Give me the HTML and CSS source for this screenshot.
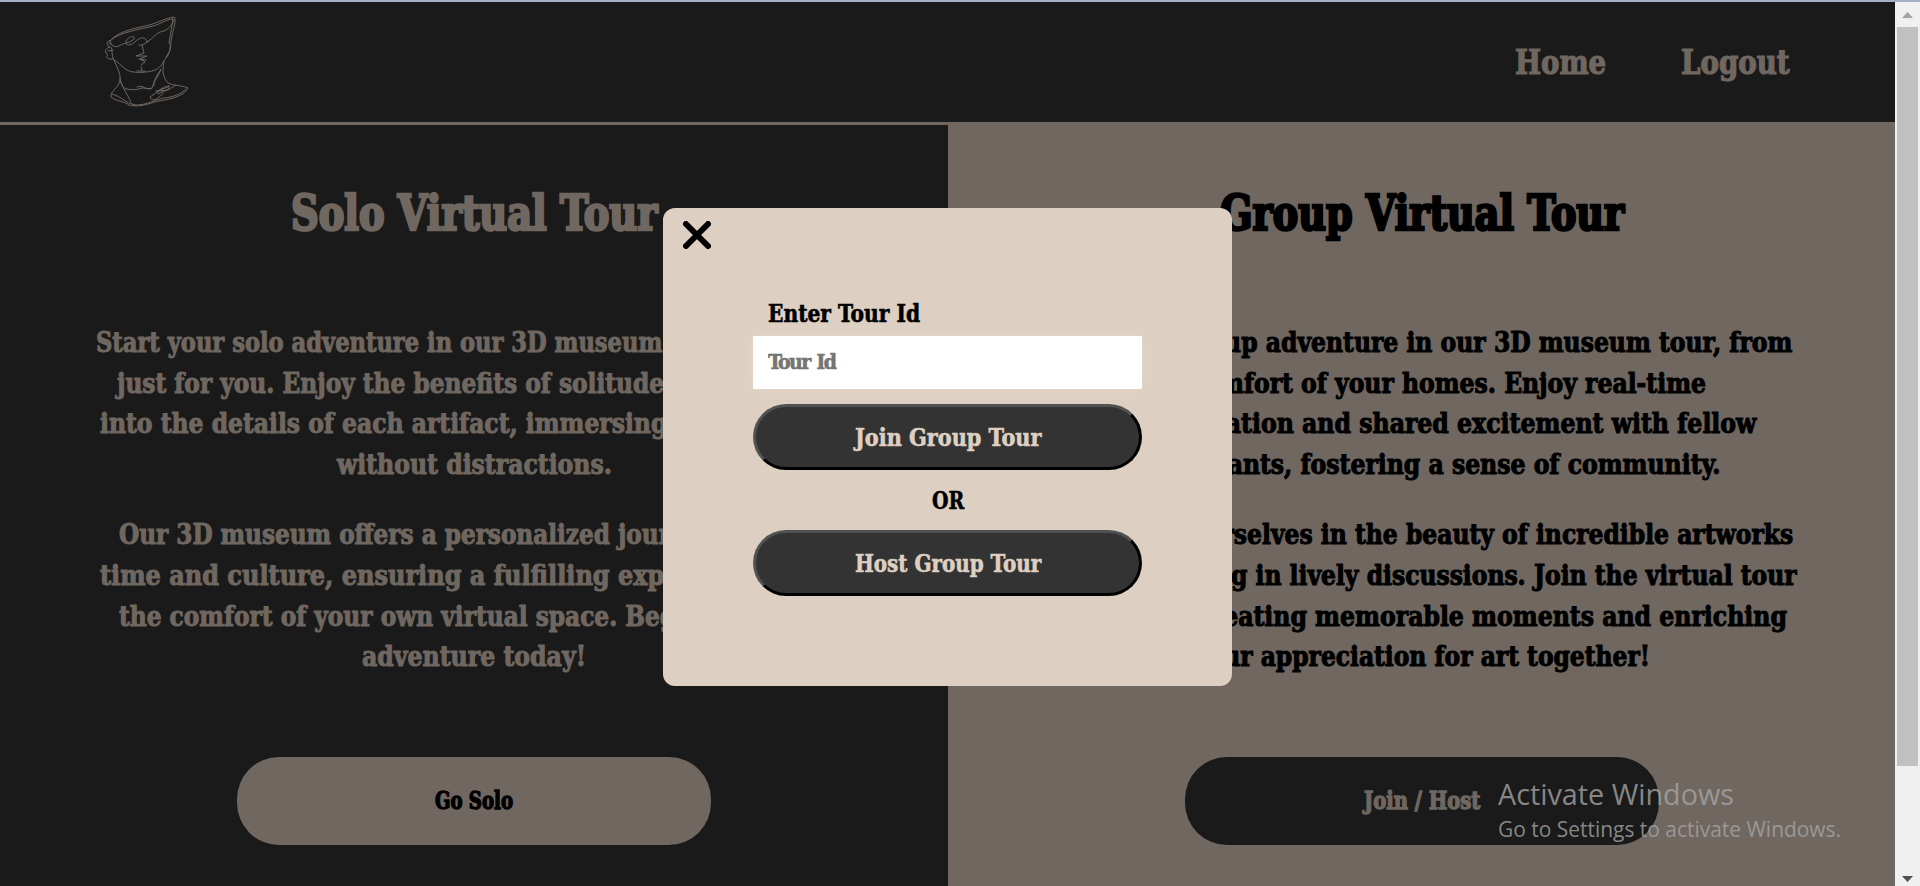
FILE: index.html
```html
<!DOCTYPE html>
<html lang="en">
<head>
<meta charset="utf-8">
<title>Virtual Tour</title>
<link rel="stylesheet" href="styles.css">
</head>
<body>
<div class="window">
  <div class="page">
    <header class="header">
      <svg class="logo" viewBox="0 2 120 120" fill="none" stroke="#6f6760" stroke-width="1" stroke-linejoin="round" stroke-linecap="round">
        <path d="M20 41C27 32 42 29 55 26C66 24 75 18 84 17C87 19 83 30 82 36C80 46 81 52 76 58C72 63 71 69 62 71C53 73 42 73 37 70C31 66 27 61 24 60C21 56 23 50 21 47"/>
        <path d="M21 40C29 33 46 30 59 27C70 25 76 19 83 19C85 22 79 29 74 31C66 32 64 38 57 42C56 36 49 37 45 42C41 46 34 46 36 41C39 36 46 35 44 39C41 43 33 43 29 46C24 48 21 45 20 41Z"/>
        <path d="M20 41C16 40 16 46 20 47C15 48 14 53 18 55C14 57 19 60 23 59M19 43L22 45M18 51L23 50M83 19L79 43C83 47 79 52 76 57"/>
        <path d="M49 45C54 46 56 42 59 41M52 45L54 53L46 56L57 56L50 59L55 62L51 65M49 59L56 60M51 67L52 70M47 71L55 71"/>
        <path d="M24 60C26 66 31 73 30 80C29 88 20 91 21 97C25 101 34 101 39 105C50 108 60 103 69 101C82 99 94 96 98 88C92 85 81 86 77 82C73 77 72 70 74 61"/>
        <path d="M30 80C33 89 38 95 41 102M30 78C31 84 33 88 36 89C42 90 47 90 52 88C56 88 60 90 62 88C64 80 69 76 71 69C67 76 63 80 64 86M47 87C53 84 56 91 62 88M22 94C33 97 34 103 46 105C57 105 64 100 74 98C84 97 91 94 96 89M79 86C74 90 66 89 68 94C72 91 80 91 79 86C71 87 65 94 60 97C61 103 70 98 73 93M66 91L78 90L86 85"/>
      </svg>
      <nav class="nav">
        <a class="fit w-home"><span>Home</span></a>
        <a class="fit w-logout"><span>Logout</span></a>
      </nav>
    </header>
    <main class="columns">
      <section class="column solo">
        <h1 class="fit title w-366"><span>Solo Virtual Tour</span></h1>
        <div class="copy">
          <p>
            <span class="fit w-756"><span>Start your solo adventure in our 3D museum tour, designed</span></span>
            <span class="fit w-714"><span>just for you. Enjoy the benefits of solitude as you delve</span></span>
            <span class="fit w-748"><span>into the details of each artifact, immersing yourself fully</span></span>
            <span class="fit w-275"><span>without distractions.</span></span>
          </p>
          <p>
            <span class="fit w-710"><span>Our 3D museum offers a personalized journey through</span></span>
            <span class="fit w-748"><span>time and culture, ensuring a fulfilling exploration all in</span></span>
            <span class="fit w-710"><span>the comfort of your own virtual space. Begin your solo</span></span>
            <span class="fit w-224"><span>adventure today!</span></span>
          </p>
        </div>
        <button class="pill"><span class="fit w-78"><span>Go Solo</span></span></button>
      </section>
      <section class="column group">
        <h1 class="fit title w-404"><span>Group Virtual Tour</span></h1>
        <div class="copy">
          <p>
            <span class="fit w-740"><span>Start our group adventure in our 3D museum tour, from</span></span>
            <span class="fit w-568"><span>the comfort of your homes. Enjoy real-time</span></span>
            <span class="fit w-668"><span>communication and shared excitement with fellow</span></span>
            <span class="fit w-596"><span>participants, fostering a sense of community.</span></span>
          </p>
          <p>
            <span class="fit w-742"><span>Immerse yourselves in the beauty of incredible artworks</span></span>
            <span class="fit w-750"><span>while engaging in lively discussions. Join the virtual tour</span></span>
            <span class="fit w-730"><span>and begin creating memorable moments and enriching</span></span>
            <span class="fit w-456"><span>your appreciation for art together!</span></span>
          </p>
        </div>
        <button class="pill"><span class="fit w-116"><span>Join / Host</span></span></button>
      </section>
    </main>
  </div>
  <div class="scrollbar">
    <svg width="11" height="6" viewBox="0 0 11 6"><path d="M5.5 0L11 6H0Z" fill="#a3a3a3"/></svg>
    <div class="thumb"></div>
    <svg class="down" width="11" height="6" viewBox="0 0 11 6"><path d="M0 0H11L5.5 6Z" fill="#505050"/></svg>
  </div>
</div>

<div class="modal">
  <svg class="close" width="28" height="28" viewBox="0 0 28 28"><path d="M3 3L25 25M25 3L3 25" stroke="#000" stroke-width="6" stroke-linecap="round"/></svg>
  <label class="label" for="tour-id"><span class="fit w-152"><span>Enter Tour Id</span></span></label>
  <input class="field" id="tour-id" placeholder="Tour Id">
  <button class="action"><span class="fit w-186"><span>Join Group Tour</span></span></button>
  <div class="or"><span class="fit w-32"><span>OR</span></span></div>
  <button class="action"><span class="fit w-186"><span>Host Group Tour</span></span></button>
</div>

<div class="watermark">
  <div class="fit watermark-title"><span>Activate Windows</span></div>
  <div class="fit watermark-note"><span>Go to Settings to activate Windows.</span></div>
</div>
<script src="fit.js"></script>
</body>
</html>
```

FILE: styles.css
```css
* { box-sizing: border-box; }
body {
  margin: 0;
  height: 886px;
  overflow: hidden;
  background: #1a1a1a;
  font-family: "DejaVu Serif Condensed", "DejaVu Serif", serif;
  font-stretch: condensed;
  font-weight: 700;
}
button, input { font: inherit; }

/* condensed text: the outer box holds the width, the inner text is scaled to it */
.fit { display: block; white-space: nowrap; text-align: left; }
.fit > span { display: inline-block; transform-origin: 0 50%; }

.window {
  display: flex;
  height: 886px;
  border-top: 2px solid #a3b0c8;
}
.page { width: 1895px; display: flex; flex-direction: column; color: #6f6760; }
.header {
  height: 120px;
  flex: none;
  display: flex;
  justify-content: space-between;
  padding: 0 105px 0 90px;
}
.logo { width: 120px; height: 120px; }
.nav { display: flex; align-items: center; gap: 75px; font-size: 33px; -webkit-text-stroke: 1.200px; }

.columns { flex: 1; display: grid; grid-template-columns: 948px 947px; }
.column {
  display: flex;
  flex-direction: column;
  align-items: center;
  border-top: 3px solid #6f6760;
  padding-top: 58px;
}
.group { background: #6f6760; color: #000; }
.title { margin: 0; font-size: 48px; line-height: 60px; font-weight: 700; -webkit-text-stroke: 2.600px; }
.copy {
  margin-top: 80px;
  display: flex;
  flex-direction: column;
  gap: 30px;
  font-size: 28px;
  line-height: 40.600px;
  -webkit-text-stroke: 1px;
}
.copy p { margin: 0; display: flex; flex-direction: column; align-items: center; }
.pill {
  margin-top: 79px;
  width: 474px;
  height: 88px;
  border: 0;
  border-radius: 42px;
  display: flex;
  align-items: center;
  justify-content: center;
  font-size: 24px;
  -webkit-text-stroke: 1.300px;
}
.solo .pill { background: #6f6760; color: #000; }
.group .pill { background: #1a1a1a; color: #6f6760; }

.scrollbar {
  width: 25px;
  background: #f0f0f0;
  display: flex;
  flex-direction: column;
  align-items: center;
  padding: 10px 0 4px;
}
.thumb { width: 21px; height: 739px; margin-top: 9px; background: #c1c1c1; }
.down { margin-top: auto; }

.modal {
  position: absolute;
  left: 663px;
  top: 208px;
  width: 569px;
  height: 478px;
  padding: 13px 90px 0;
  border-radius: 12px;
  background: #ddd0c2;
  color: #000;
  font-size: 25px;
  display: flex;
  flex-direction: column;
  -webkit-text-stroke: 0.600px;
}
.close { margin-left: -70px; }
.label { margin-top: 50px; padding-left: 15px; line-height: 30px; }
.field {
  width: 389px;
  height: 53px;
  margin-top: 7px;
  padding: 0 15px 3px;
  border: 0;
  border-radius: 0;
  font-size: 21px;
  letter-spacing: -1.600px;
  word-spacing: 2px;
  box-shadow: 0 0 14px #e4d5cb;
}
.field::placeholder { color: #757575; }
.action {
  width: 389px;
  height: 66px;
  margin-top: 15px;
  padding: 0;
  border: 3px outset #000;
  border-color: #505252 #000 #000 #505252;
  border-radius: 33px;
  background: #333;
  color: #ddd0c2;
  display: flex;
  align-items: center;
  justify-content: center;
}
.or { margin-top: 15px; height: 30px; line-height: 31px; display: flex; justify-content: center; }

.watermark {
  position: absolute;
  left: 1498px;
  top: 774px;
  font-family: "Open Sans", sans-serif;
  font-weight: 400;
  font-stretch: normal;
  color: rgba(165, 165, 165, 0.800);
}
.watermark-title { width: 236px; font-size: 29px; line-height: 40px; }
.watermark-note { width: 343px; font-size: 21px; line-height: 30px; }

.w-home { width: 91px; }
.w-logout { width: 109px; }
.w-32 { width: 32px; }
.w-78 { width: 78px; }
.w-116 { width: 116px; }
.w-152 { width: 152px; }
.w-186 { width: 186px; }
.w-224 { width: 224px; }
.w-275 { width: 275px; }
.w-366 { width: 366px; }
.w-404 { width: 404px; }
.w-456 { width: 456px; }
.w-568 { width: 568px; }
.w-596 { width: 596px; }
.w-668 { width: 668px; }
.w-710 { width: 710px; }
.w-714 { width: 714px; }
.w-730 { width: 730px; }
.w-740 { width: 740px; }
.w-742 { width: 742px; }
.w-748 { width: 748px; }
.w-750 { width: 750px; }
.w-756 { width: 756px; }
```

FILE: fit.js
```js
// Scale each text horizontally so that it fills its box.
document.querySelectorAll('.fit').forEach(function (box) {
  var text = box.firstElementChild;
  text.style.transform = 'scaleX(' + box.clientWidth / text.offsetWidth + ')';
});
```
